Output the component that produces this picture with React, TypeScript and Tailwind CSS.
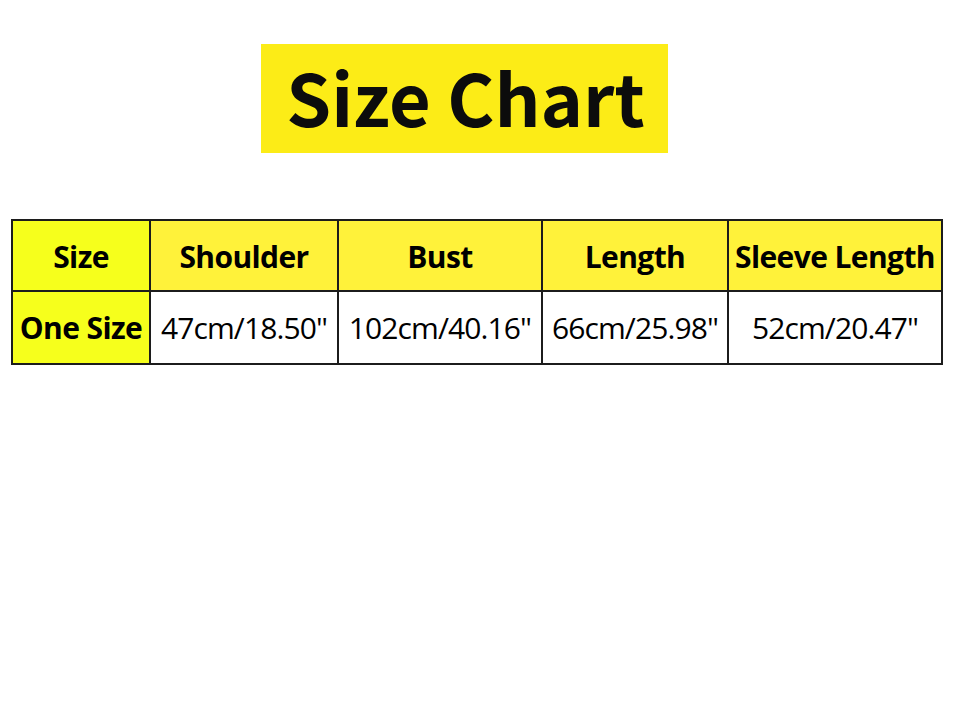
export default function App() {
  const cols = [
    { head: 'Size', value: 'One Size', w: 'w-[136px]' },
    { head: 'Shoulder', value: '47cm/18.50"', w: 'w-[188px]' },
    { head: 'Bust', value: '102cm/40.16"', w: 'w-[204px]' },
    { head: 'Length', value: '66cm/25.98"', w: 'w-[186px]' },
    { head: 'Sleeve Length', value: '52cm/20.47"', w: 'w-[214px]' },
  ];

  return (
    <div className="w-[957px] h-[712px] bg-white font-['Open_Sans',sans-serif] text-black">
      <div className="pt-[44px] flex">
        <div className="ml-[261px] w-[407px] h-[109px] bg-[#fcec17] flex items-center justify-center">
          <h1 className="font-['Noto_Sans_CJK_SC','Noto_Sans',sans-serif] font-bold text-[72px] leading-none text-[#0c0c0c] pb-[6px] pl-[2px]">
            Size Chart
          </h1>
        </div>
      </div>

      <div className="mt-[66px] ml-[11px] w-[932px] border-2 border-[#1c1c1c] flex">
        {cols.map((c, i) => (
          <div
            key={c.head}
            className={`${c.w} shrink-0 flex flex-col ${i > 0 ? 'border-l-2 border-[#1c1c1c]' : ''}`}
          >
            <div
              className={`h-[71px] pt-[1px] border-b-2 border-[#1c1c1c] flex items-center justify-center font-bold text-[30px] tracking-[-0.6px] whitespace-nowrap ${
                i === 0 ? 'bg-[#f6ff1c]' : 'bg-[#fff23a]'
              }`}
            >
              {c.head}
            </div>
            <div
              className={`h-[71px] flex items-center justify-center text-[30px] whitespace-nowrap ${
                i === 0 ? 'bg-[#f6ff1c] font-bold tracking-[-0.6px]' : 'bg-white tracking-[-0.9px]'
              }`}
            >
              {c.value}
            </div>
          </div>
        ))}
      </div>
    </div>
  );
}
